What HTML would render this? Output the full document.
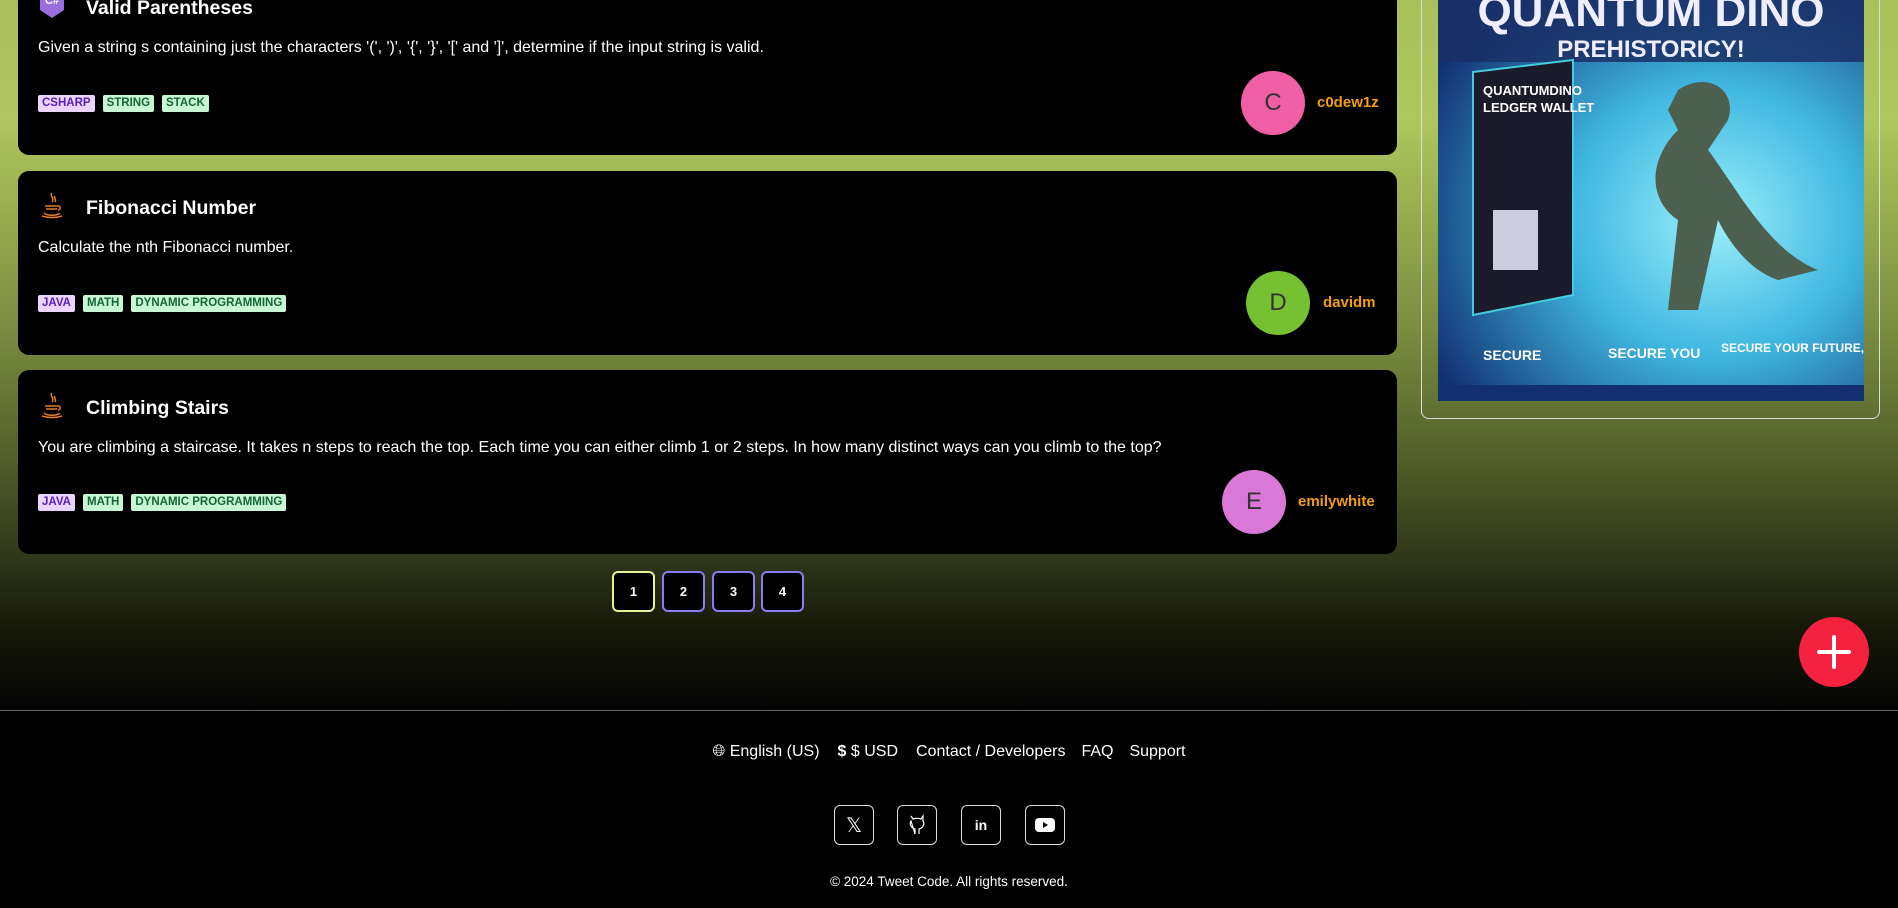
<!DOCTYPE html>
<html><head><meta charset="utf-8"><style>
*{box-sizing:border-box;margin:0;padding:0}
body{width:1898px;height:908px;overflow:hidden;font-family:"Liberation Sans",sans-serif;color:#fff;position:relative;
background:linear-gradient(180deg,#a9c05a 0px,#aec75e 120px,#9bb050 200px,#7a8c40 330px,#5b6a2e 430px,#2f3619 560px,#151809 630px,#050505 705px,#000 711px,#000 908px)}
.card{position:absolute;left:18px;width:1379px;background:#000;border-radius:11px}
.ic{position:absolute;left:38px;width:28px;height:28px}
.title{position:absolute;left:86px;font-size:19.5px;font-weight:bold;line-height:24px}
.desc{position:absolute;left:38px;font-size:16px;line-height:20px}
.tags{position:absolute;left:38px;display:flex;gap:8px}
.tag{font-size:11.5px;font-weight:bold;height:17px;line-height:17px;padding:0 4px;border-radius:2px}
.p{background:#e9d5ff;color:#5b21b6}.g{background:#c8f7d4;color:#166534}
.av{position:absolute;width:64px;height:64px;border-radius:50%;color:#333;font-size:24px;text-align:center;line-height:64px}
.un{position:absolute;color:#f59e0b;font-size:15px;font-weight:bold;line-height:20px}
.pg{position:absolute;top:571px;width:43px;height:41px;border-radius:6px;background:#000;border:2px solid #8b7cf0;font-size:13px;font-weight:bold;text-align:center;line-height:37px}
.soc{position:absolute;top:805px;width:40px;height:40px;border:1.5px solid #ddd;border-radius:6px;display:flex;align-items:center;justify-content:center}
</style></head><body>

<div class="card" style="top:-40px;height:195px"></div>
<svg class="ic" style="top:-6px" viewBox="0 0 28 28"><path d="M2 0h24v16l-12 8l-12-8z" fill="#9b6ee0"/><text x="14" y="10" font-size="11" font-weight="bold" fill="#fff" text-anchor="middle" font-family="Liberation Sans">C#</text></svg>
<div class="title" style="top:-4px">Valid Parentheses</div>
<div class="desc" style="top:38px">Given a string s containing just the characters '(', ')', '{', '}', '[' and ']', determine if the input string is valid.</div>
<div class="tags" style="top:95px"><span class="tag p">CSHARP</span><span class="tag g">STRING</span><span class="tag g">STACK</span></div>
<div class="av" style="left:1241px;top:71px;background:#f05fa5">C</div>
<div class="un" style="left:1317px;top:93px">c0dew1z</div>

<div class="card" style="top:171px;height:184px"></div>
<svg class="ic" style="top:191px" viewBox="0 0 28 28" fill="none" stroke="#e87a1e" stroke-width="1.5"><path d="M14 2c-3 3 3 5 0 9M17 5c-2 2 2 3 0 6"/><path d="M7 15h13M8 18h11M6 22c3 3 13 3 16 0M20 15c3 0 3 4 0 4"/><path d="M4 25c6 2 14 2 20 0"/></svg>
<div class="title" style="top:196px">Fibonacci Number</div>
<div class="desc" style="top:238px">Calculate the nth Fibonacci number.</div>
<div class="tags" style="top:295px"><span class="tag p">JAVA</span><span class="tag g">MATH</span><span class="tag g">DYNAMIC PROGRAMMING</span></div>
<div class="av" style="left:1246px;top:271px;background:#76c131">D</div>
<div class="un" style="left:1323px;top:293px">davidm</div>

<div class="card" style="top:370px;height:184px"></div>
<svg class="ic" style="top:391px" viewBox="0 0 28 28" fill="none" stroke="#e87a1e" stroke-width="1.5"><path d="M14 2c-3 3 3 5 0 9M17 5c-2 2 2 3 0 6"/><path d="M7 15h13M8 18h11M6 22c3 3 13 3 16 0M20 15c3 0 3 4 0 4"/><path d="M4 25c6 2 14 2 20 0"/></svg>
<div class="title" style="top:396px">Climbing Stairs</div>
<div class="desc" style="top:438px">You are climbing a staircase. It takes n steps to reach the top. Each time you can either climb 1 or 2 steps. In how many distinct ways can you climb to the top?</div>
<div class="tags" style="top:494px"><span class="tag p">JAVA</span><span class="tag g">MATH</span><span class="tag g">DYNAMIC PROGRAMMING</span></div>
<div class="av" style="left:1222px;top:470px;background:#d978d6">E</div>
<div class="un" style="left:1298px;top:492px">emilywhite</div>

<div class="pg" style="left:612px;border-color:#e8f09a">1</div>
<div class="pg" style="left:662px">2</div>
<div class="pg" style="left:712px">3</div>
<div class="pg" style="left:761px">4</div>

<div style="position:absolute;left:1421px;top:-20px;width:459px;height:439px;border:1.5px solid #ddd;border-radius:8px"></div>
<svg style="position:absolute;left:1438px;top:0" width="426" height="401" viewBox="0 0 426 401">
<defs><radialGradient id="r" cx="0.65" cy="0.55" r="0.75"><stop offset="0" stop-color="#9af0fa"/><stop offset="0.45" stop-color="#3fb6e0"/><stop offset="1" stop-color="#123070"/></radialGradient></defs>
<rect width="426" height="401" fill="url(#r)"/>
<rect y="0" width="426" height="62" fill="#1a2f66" opacity="0.85"/>
<text x="213" y="26" font-size="44" font-weight="bold" fill="#eef" text-anchor="middle" font-family="Liberation Sans">QUANTUM DINO</text>
<text x="213" y="57" font-size="24" font-weight="bold" fill="#eef" text-anchor="middle" font-family="Liberation Sans">PREHISTORICY!</text>
<path d="M35 72l100-12v235l-100 20z" fill="#1a1a2a" stroke="#4cd" stroke-width="2"/>
<text x="45" y="95" font-size="13" font-weight="bold" fill="#fff" font-family="Liberation Sans">QUANTUMDINO</text>
<text x="45" y="112" font-size="13" font-weight="bold" fill="#fff" font-family="Liberation Sans">LEDGER WALLET</text>
<path d="M55 210h45v60h-45z" fill="#ccd"/>
<path d="M240 90c30-20 60 0 50 30l-20 30c30 40 60 100 110 120l-40 10c-30-10-50-40-60-60l-20 90h-30l10-90c-30-20-30-60 0-90l-10-20z" fill="#4d6050"/>
<text x="45" y="360" font-size="14" font-weight="bold" fill="#fff" font-family="Liberation Sans">SECURE</text>
<text x="170" y="358" font-size="14" font-weight="bold" fill="#fff" font-family="Liberation Sans">SECURE YOU</text>
<text x="283" y="352" font-size="12" font-weight="bold" fill="#fff" font-family="Liberation Sans">SECURE YOUR FUTURE,</text>
<rect y="385" width="426" height="16" fill="#123070"/>
</svg>

<div style="position:absolute;left:1799px;top:617px;width:70px;height:70px;border-radius:50%;background:#f4213f"><svg width="70" height="70"><path d="M35 20v30M20 35h30" stroke="#fff" stroke-width="4" stroke-linecap="round"/></svg></div>

<div style="position:absolute;left:0;top:710px;width:1898px;height:1px;background:#666"></div>
<div style="position:absolute;left:0;top:711px;width:1898px;height:197px;background:#000"></div>
<div style="position:absolute;top:742px;left:0;width:1898px;text-align:center;font-size:16px;line-height:20px;white-space:nowrap">
<span>&#127760;&#xFE0E; English (US)</span><span style="margin-left:18px"><b>$</b> $ USD</span><span style="margin-left:18px">Contact / Developers</span><span style="margin-left:16px">FAQ</span><span style="margin-left:16px">Support</span></div>
<div class="soc" style="left:834px"><span style="font-size:20px">𝕏</span></div>
<div class="soc" style="left:897px"><svg width="20" height="22" viewBox="0 0 20 22" fill="none" stroke="#fff" stroke-width="1.2"><path d="M4 2l2 3c3-1 5-1 8 0l2-3v5c2 3 0 7-4 8v5M8 20v-5c-4-1-6-5-4-8z"/></svg></div>
<div class="soc" style="left:961px"><span style="font-size:14px;font-weight:bold">in</span></div>
<div class="soc" style="left:1025px"><svg width="20" height="14"><rect width="20" height="14" rx="4" fill="#fff"/><path d="M8 4l5 3l-5 3z" fill="#000"/></svg></div>
<div style="position:absolute;top:874px;left:0;width:1898px;text-align:center;font-size:13.5px">© 2024 Tweet Code. All rights reserved.</div>
</body></html>
